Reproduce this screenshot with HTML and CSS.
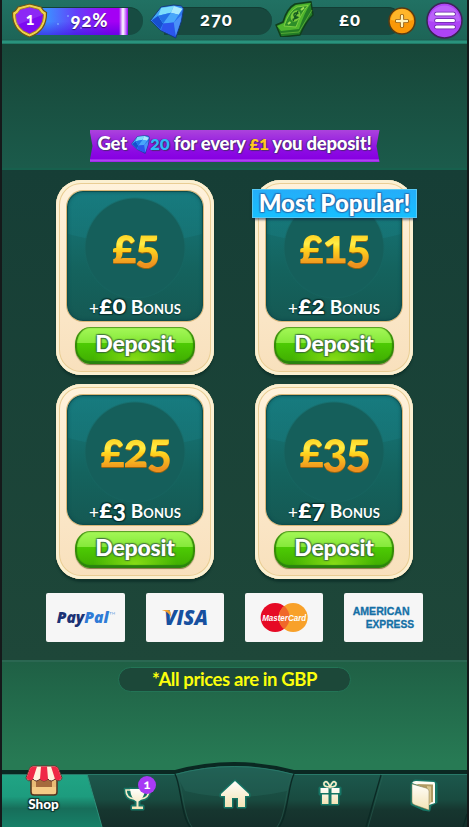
FILE: index.html
```html
<!DOCTYPE html>
<html lang="en">
<head>
<meta charset="utf-8">
<title>Shop</title>
<link rel="stylesheet" href="styles.css">
</head>
<body>
<svg class="defs" width="0" height="0" aria-hidden="true">
  <defs>
    <linearGradient id="cream" x1="0" y1="0" x2="0" y2="1"><stop offset="0" stop-color="#fffefa"/><stop offset="1" stop-color="#f3e3b5"/></linearGradient>
    <linearGradient id="gem" x1="0" y1="0" x2="1" y2="1"><stop offset="0" stop-color="#4fc4fa"/><stop offset=".5" stop-color="#2e86f3"/><stop offset="1" stop-color="#1b35dc"/></linearGradient>
    <symbol id="diamond" viewBox="0 0 36 36">
      <path d="M1 17 12 3 25 1 33 2 35 5 33 17 27 35 11 27Z" fill="url(#gem)" stroke="#173a7a" stroke-width="1" stroke-linejoin="round"/>
      <path d="M12 4 25 2 22 9 9 12Z" fill="#7bdcfb"/>
      <path d="M25 2 34 5 30 11 22 9Z" fill="#a9e9fd"/>
      <path d="M2 17 9 12 14 20 11 26Z" fill="#174fcf"/>
      <path d="M9 12 22 9 30 11 25 19 14 20Z" fill="#49a7fa"/>
      <path d="M14 20 25 19 26 33 12 27Z" fill="#2c55ed"/>
      <path d="M25 19 33 11 32 18 27 33Z" fill="#4a91f8"/>
      <path d="M9 12 22 9 14 20Z" fill="#2372e7"/>
    </symbol>
  </defs>
</svg>
<div class="app">
  <header class="topbar">
    <div class="level">
      <svg class="shield" width="37" height="35" viewBox="0 0 37 35">
        <path d="M18.500 1 30 4Q32 8 35.500 9.500 36 28 18.500 34 1 28 1.500 9.500 5 8 7 4Z" fill="#f1d34c" stroke="#6b5418" stroke-width="1.200"/>
        <path d="M18.500 4 28 6.500Q29.500 10 32.500 11.500 32.500 26 18.500 31 4.500 26 4.500 11.500 7.500 10 9 6.500Z" fill="#7d0af2" stroke="#a98722" stroke-width="1"/>
        <path d="M18.500 4.500 28 7Q29.500 10 32 11.700L6 22Q4.700 17 5 11.700 7.500 10 9 7Z" fill="#9c45f7" opacity=".5"/>
      </svg>
      <span class="rank">1</span>
      <div class="meter"><div class="meter-fill"><span class="num">92%</span></div></div>
    </div>
    <div class="counter gems">
      <svg class="icon-gem" width="36" height="35"><use href="#diamond"/></svg>
      <span class="num">270</span>
    </div>
    <div class="counter cash">
      <svg class="icon-cash" width="39" height="36" viewBox="0 0 39 36">
        <path d="M1 24 8 21Q12 7 20 3L36 0.800 38 14Q31 20 25 34L6 36Z" fill="#237d25" stroke="#10401c" stroke-width="1.500" stroke-linejoin="round"/>
        <path d="M2 25 9 22Q13 8 21 4L36 2Q30 10 24 28L6 30Z" fill="#4fb52e"/>
        <path d="M9 25Q14 10 22 6L33 4.500Q26 12 21 26Z" fill="#2d8e28" stroke="#8bd747" stroke-width=".8"/>
        <ellipse cx="20.500" cy="15" rx="6" ry="4.500" transform="rotate(-60 20.500 15)" fill="#78ca3d"/>
        <path d="M23.500 12.500Q19.500 11 19 13.500T22 16 17.500 18.500M23 10 18 20" fill="none" stroke="#155a20" stroke-width="1.400"/>
        <path d="M29 6.500 26 9M13 23 15.500 21" fill="none" stroke="#9cdd55" stroke-width="2"/>
        <path d="M6 32.500 24 31 37 9" fill="none" stroke="#62b33a" stroke-width=".8"/>
      </svg>
      <span class="num">£0</span>
      <svg class="icon-plus" width="28" height="28" viewBox="0 0 28 28">
        <circle cx="14" cy="14" r="13" fill="#fa9807" stroke="#593b12" stroke-width="1.500"/>
        <path d="M3 13A11 11 0 0 1 25 13Q15 16 3 13Z" fill="#ffb52a"/>
        <path d="M14 9v10M9 14h10" stroke="#92590b" stroke-width="4.200" stroke-linecap="round"/>
        <path d="M14 9v10M9 14h10" stroke="#fff3bc" stroke-width="2.400" stroke-linecap="round"/>
      </svg>
    </div>
    <svg class="icon-menu" width="37" height="37" viewBox="0 0 37 37">
      <circle cx="18.500" cy="18.500" r="17.500" fill="#ad43f6" stroke="#3c2357" stroke-width="1.500"/>
      <path d="M3 19A15.500 15.500 0 0 1 34 19Q18 23 3 19Z" fill="#bb62fa"/>
      <path d="M10.500 12h17M10.500 18.500h17M10.500 25h17" stroke="#6621a6" stroke-width="4.500" stroke-linecap="round"/>
      <path d="M10.500 12h17M10.500 18.500h17M10.500 25h17" stroke="#fff" stroke-width="3" stroke-linecap="round"/>
    </svg>
  </header>

  <section class="promo">
    <div class="ribbon"><p>Get <svg class="mini-gem" width="19" height="19"><use href="#diamond"/></svg><b class="blue">20</b> for every <b class="gold">£1</b> you deposit!</p></div>
  </section>

  <main class="shop">
    <div class="offers">
      <article class="card">
        <div class="panel"><strong class="price">£5</strong><p class="bonus">+<b>£0</b> <span>Bonus</span></p></div>
        <button class="deposit"><span>Deposit</span></button>
      </article>
      <article class="card">
        <div class="popular"><span>Most Popular!</span></div>
        <div class="panel"><strong class="price">£15</strong><p class="bonus">+<b>£2</b> <span>Bonus</span></p></div>
        <button class="deposit"><span>Deposit</span></button>
      </article>
      <article class="card">
        <div class="panel"><strong class="price">£25</strong><p class="bonus">+<b>£3</b> <span>Bonus</span></p></div>
        <button class="deposit"><span>Deposit</span></button>
      </article>
      <article class="card">
        <div class="panel"><strong class="price">£35</strong><p class="bonus">+<b>£7</b> <span>Bonus</span></p></div>
        <button class="deposit"><span>Deposit</span></button>
      </article>
    </div>
    <div class="payments">
      <svg class="pay" viewBox="0 0 78 49">
        <text x="10.500" y="30" textLength="52" lengthAdjust="spacingAndGlyphs" class="paypal"><tspan fill="#1c3275">Pay</tspan><tspan fill="#2f7bd6">Pal</tspan></text>
        <path d="M63.500 19.500h2M64.500 19.500v2M66.500 21.500v-2l1 1 1-1v2" fill="none" stroke="#2f7bd6" stroke-width=".4"/>
      </svg>
      <svg class="pay" viewBox="0 0 78 49">
        <text x="18" y="32" textLength="44" lengthAdjust="spacingAndGlyphs" class="visa" fill="#17509f">VISA</text>
        <path d="M15.500 17H22Q24 17 24.500 19.500L25 24Q22 18.500 15.500 17Z" fill="#f2a02d"/>
      </svg>
      <svg class="pay" viewBox="0 0 78 49">
        <circle cx="30" cy="24.500" r="14.500" fill="#e60a25"/>
        <circle cx="48" cy="24.500" r="14.500" fill="#f8a12a"/>
        <path d="M39 13.100A14.500 14.500 0 0 1 39 35.900 14.500 14.500 0 0 1 39 13.100Z" fill="#f0672a"/>
        <text x="17" y="28" textLength="44" lengthAdjust="spacingAndGlyphs" class="mc" fill="#fff">MasterCard</text>
      </svg>
      <svg class="pay" viewBox="0 0 78 49">
        <text x="8.500" y="22" textLength="57" lengthAdjust="spacingAndGlyphs" class="amex">AMERICAN</text>
        <text x="21.500" y="35" textLength="48.500" lengthAdjust="spacingAndGlyphs" class="amex">EXPRESS</text>
      </svg>
    </div>
  </main>

  <footer class="note-area"><p class="note"><span>*All prices are in GBP</span></p></footer>

  <nav class="tabs">
    <svg class="tabs-bg" width="465" height="66" viewBox="0 0 465 66">
      <defs>
        <linearGradient id="bar" x1="0" y1="0" x2="0" y2="1"><stop offset="0" stop-color="#1d5c50"/><stop offset=".55" stop-color="#194b40"/><stop offset=".72" stop-color="#16362f"/><stop offset="1" stop-color="#142f2b"/></linearGradient>
        <linearGradient id="active" x1="0" y1="0" x2="0" y2="1"><stop offset="0" stop-color="#20a484"/><stop offset=".42" stop-color="#1d9c7e"/><stop offset=".65" stop-color="#176e5a"/><stop offset="1" stop-color="#178068"/></linearGradient>
      </defs>
      <path d="M0 9H173Q232 -7 292 9H465V66H0Z" fill="#0a2822"/>
      <path d="M0 13H173Q232 -3 292 13H465V66H0Z" fill="url(#bar)"/>
      <path d="M0 13.500H85L100 66H0Z" fill="url(#active)"/>
      <path d="M85 13 100 66" stroke="#2d917b"/>
      <path d="M174 13Q232 -3 291 13L285 30Q232 42 183 30Z" fill="#2c6f62" opacity=".32"/>
      <path d="M0 13.500H173Q232 -2.500 292 13.500H465" fill="none" stroke="#287969"/>
      <path d="M173 13C179 24 179 55 188 66M292 13C286 24 286 55 277 66M379 14 364 66M465 53 461 66" fill="none" stroke="#0b2924" stroke-width="1.300"/>
      <path d="M175 14C181 25 181 55 190 66M290 14C284 25 284 55 275 66M381 14 366 66" fill="none" stroke="#2a6457" stroke-width=".5"/>
    </svg>
    <a class="tab active">
      <svg width="38" height="31" viewBox="0 0 38 31">
        <path d="M6 13H32V27Q32 30 29 30H9Q6 30 6 27Z" fill="#e9bb75" stroke="#56351f" stroke-width="1.500"/>
        <path d="M11 14H27V22H11Z" fill="#a56a3d"/><path d="M7 22H31V27Q31 29 29 29H9Q7 29 7 27Z" fill="#f5cb86"/>
        <path d="M8 1H30Q33 1 34 5L37 13Q35 18 30 14 26 18 23 14 19 18 15 14 11 18 8 14 3 18 1 13L4 5Q5 1 8 1Z" fill="#fff3dd" stroke="#5c3028"/>
        <path d="M8 1.500H12L8 14Q4 17 1.500 13L4.500 5Q5 2 8 1.500ZM16 1.500H22L23 14Q19 18 15 14ZM26 1.500H30Q33 2 33.500 5L36.500 13Q34 17 30 14Z" fill="#ef2946"/>
      </svg>
      <span>Shop</span>
    </a>
    <a class="tab trophy">
      <svg width="28" height="27" viewBox="0 0 28 27">
        <g stroke="#167565" stroke-width="3" stroke-linejoin="round" fill="#167565"><path d="M7 4H22Q20 14 16 16V21H20V24H9V21H13V16Q8 14 7 4Z"/></g>
        <path d="M8 5H3Q3 13 11 14M21 5H26Q26 13 18 14" fill="none" stroke="#167565" stroke-width="4.500"/>
        <path d="M8 5H3Q3 13 11 14M21 5H26Q26 13 18 14" fill="none" stroke="#f8edc8" stroke-width="1.600"/>
        <path d="M7 4H22Q21 14 15.500 16.500V21.500H20V24H9V21.500H13.500V16.500Q8 14 7 4Z" fill="url(#cream)"/>
      </svg>
      <span class="badge">1</span>
    </a>
    <a class="tab home">
      <svg width="34" height="33" viewBox="0 0 34 33"><path d="M17 3 31 16V18H27V29H20V20H14V29H7V18H3V16Z" fill="url(#cream)" stroke="#167565" stroke-width="3" stroke-linejoin="round" paint-order="stroke"/></svg>
    </a>
    <a class="tab gift">
      <svg width="24" height="27" viewBox="0 0 24 27">
        <path d="M2 9H22V15H20V25H4V15H2ZM12 8Q5 8 6 4 9 0 12 8 15 0 18 4 19 8 12 8" fill="#167565" stroke="#167565" stroke-width="3" stroke-linejoin="round"/>
        <path d="M2.500 9H10.500V14H2.500ZM13.500 9H21.500V14H13.500ZM4 15.500H10.500V25H4ZM13.500 15.500H20V25H13.500Z" fill="url(#cream)"/>
        <path d="M12 8Q5 8 6 4 9 0 12 8 15 0 18 4 19 8 12 8" fill="none" stroke="#f8edc8" stroke-width="1.700"/>
      </svg>
    </a>
    <a class="tab book">
      <svg width="29" height="33" viewBox="0 0 29 33">
        <path d="M3 5 6 2 25 3 27 5V23L21 26 20 31 14 30 3 25Z" fill="#167565" stroke="#167565" stroke-width="3" stroke-linejoin="round"/>
        <path d="M3 4Q4 2 7 2L25 3Q26 3 26 5V24L20 26V10Z" fill="#fffdf4"/><path d="M7 5 24 5.500V23L19 24V11Z" fill="#b09a63"/><path d="M18 7 22 7.500V24L19.500 25Z" fill="#d8c58e"/>
        <path d="M3 5 17 9Q20 10 20 12V31L6 26Q3 25 3 23Z" fill="url(#cream)" stroke="#8b7a48" stroke-width=".5"/>
      </svg>
    </a>
  </nav>
</div>
</body>
</html>
```

FILE: styles.css
```css
* { box-sizing: border-box; }
body { margin: 0; background: #15191a; font-family: Lato, "Open Sans", sans-serif; font-variant-numeric: oldstyle-nums; color: #fff; }
p { margin: 0; }
svg { display: block; flex: none; }
.defs { position: absolute; }
.app { width: 465px; height: 827px; margin: 0 2px; display: flex; flex-direction: column; overflow: hidden; }

.topbar { height: 44px; flex: none; display: flex; align-items: flex-start; padding: 3px 2px 0 9px; background: linear-gradient(#217163, #1d6557 39px, #1c5c50 40px, #29937d 41px, #29937d 43px, #196452 44px); }
.level { display: flex; position: relative; width: 138px; }
.shield { position: relative; z-index: 1; }
.rank { position: absolute; z-index: 2; left: 13px; top: 7px; width: 12px; text-align: center; font-size: 16px; line-height: 18px; font-weight: 900; }
.meter { width: 107px; height: 28px; margin: 4px 0 0 -12px; border-radius: 0 14px 14px 0; background: #174c42; border-top: 1px solid #124237; overflow: hidden; }
.meter-fill { width: 92px; height: 27px; display: flex; justify-content: center; padding-left: 15px; background: linear-gradient(90deg, transparent 83px, #eac8ff 86px, #fff 87px, #c164ff 90px, transparent 92px), radial-gradient(circle at 32px 8px, #87b9ffaa 0 .5px, transparent 1.5px), radial-gradient(circle at 45px 20px, #a184ffaa 0 .5px, transparent 1.5px), radial-gradient(circle at 22px 16px, #87b9ffaa 0 .5px, transparent 1.5px), linear-gradient(transparent 50%, #3900dc88), linear-gradient(90deg, #3f8cff 12px, #6340fa 40px, #a400f4 75px); }
.num { font-size: 18.500px; line-height: 24px; font-weight: 900; letter-spacing: .9px; text-shadow: 0 1px 1px #0008; }
.counter { display: flex; position: relative; }
.counter::before { content: ""; height: 27px; margin-top: 4px; border-radius: 0 14px 14px 0; background: #18493f; border-top: 1px solid #123d34; }
.gems { width: 125px; }
.gems::before { width: 108px; margin-left: 15px; }
.icon-gem { position: absolute; left: 0; top: 1px; }
.gems .num { position: absolute; left: 51px; top: 4px; }
.cash { width: 151px; }
.cash::before { width: 110px; margin-left: 18px; }
.icon-cash { position: absolute; left: 1px; top: -2px; }
.cash .num { position: absolute; left: 65px; top: 4px; }
.icon-plus { position: absolute; left: 114px; top: 4px; }
.icon-menu { margin-top: -1px; margin-left: 1px; }

.promo { height: 126px; flex: none; padding-top: 86px; background: linear-gradient(#174638, #1b5b4b); border-bottom: 2px solid #17604d; }
.ribbon { width: 290px; height: 32px; margin: 0 auto; display: flex; justify-content: center; background: linear-gradient(#ab43dc, #8c0be3 65%, #8700e2 90%, #b34cf3 94%, #9b1ce9); clip-path: polygon(0 0, 100% 0, calc(100% - 3px) 50%, 100% 100%, 0 100%, 3px 50%); }
.ribbon p { font-size: 18.500px; line-height: 26px; font-weight: 900; white-space: nowrap; letter-spacing: -.25px; text-shadow: 1px 1px 1px #50277a, -1px 0 1px #50277a; }
.mini-gem { display: inline-block; vertical-align: -4px; }
.blue { color: #2fbafa; }
.gold { color: #ffc81f; }

.shop { height: 490px; flex: none; padding-top: 10px; background: linear-gradient(#163e36, #1e4739); }
.offers { display: grid; grid-template-columns: 158px 158px; gap: 9px 41px; justify-content: center; }
.card { position: relative; height: 195px; padding: 11px 11px 0; border: 0; border-radius: 25px; background: linear-gradient(#fff2dc, #f8e0bc); box-shadow: inset 0 0 0 3px #fbf0d2, inset 0 0 0 4px #e9cd94, 0 3px 2px #10342c; }
.panel { height: 130px; border-radius: 16px; display: flex; flex-direction: column; align-items: center; background: radial-gradient(circle at 68px 57px, #155f5b 49px, #17666280 50px, transparent 51px), radial-gradient(ellipse 110px 42px at 68px 10px, #187e8266 98%, transparent), linear-gradient(#16797d, #14635e 60%, #155953); box-shadow: inset 0 0 4px #0b454a, inset 0 0 0 1px #11534f, 0 0 0 1px #d9b778; }
.price { height: 94px; padding: 28px 5px 0; font-size: 47px; line-height: 52px; font-weight: 900; letter-spacing: -1.8px; color: transparent; background: linear-gradient(#ffbd20 38px, #ffd829 46px, #ffee48 53px, #ffd51f 58px, #ee911f 74px); background-clip: text; -webkit-background-clip: text; filter: drop-shadow(0 1px 0 #956512); }
.bonus { margin-top: 9px; font-size: 18.500px; line-height: 28px; white-space: nowrap; text-shadow: 0 1px 1px #09332f; }
.bonus b { font-size: 25px; font-weight: 900; text-shadow: 1px 1px 1px #07312d, -1px -1px 1px #07312d, 1px -1px 1px #07312d, -1px 1px 1px #07312d; }
.bonus span { font-variant-caps: small-caps; font-weight: 700; font-size: 19px; letter-spacing: .1px; }
.deposit { display: flex; justify-content: center; width: 120px; height: 37px; margin: 6px auto 0; padding: 0; border: 0; border-radius: 15px / 17px; background: radial-gradient(ellipse 42px 26px at 50% 90%, #87dc16, transparent), linear-gradient(#a5f858, #86e93b 42%, #4dcb04 44%, #3faa01); box-shadow: inset 0 1px 1px #579d23, inset 2px 0 1px #328807, inset -2px 0 1px #328807, inset 0 -3px 1px #298210, 0 1px 1px #867549; color: #fff; font: inherit; }
.deposit span { font-size: 23px; line-height: 32px; font-weight: 900; letter-spacing: -.2px; text-shadow: 1px 1px 1px #38643aaa, -1px -1px 1px #38643aaa, 1px -1px 1px #38643aaa, -1px 1px 1px #38643aaa; }
.popular { position: absolute; z-index: 1; left: -3px; top: 9px; width: 165px; height: 29px; display: flex; justify-content: center; background: linear-gradient(#25adf9, #17c0ff); border: 1px solid #57c9f5; box-shadow: 0 2px 2px #1248; }
.popular span { font-size: 24px; line-height: 25px; font-weight: 900; white-space: nowrap; letter-spacing: 0; text-shadow: 1px 1px 1px #2861a4aa, -1px -1px 1px #2861a4aa, 1px -1px 1px #2861a4aa, -1px 1px 1px #2861a4aa; }
.payments { display: flex; justify-content: center; gap: 21px; margin-top: 14px; }
.pay { width: 78.300px; height: 49px; border-radius: 2px; background: #f6f6f6; }
.paypal { font: italic 900 16.500px "Open Sans", sans-serif; }
.visa { font: italic 800 21px "Open Sans", sans-serif; }
.mc { font: italic 700 9px "Liberation Sans", sans-serif; }
.amex { font: 700 10.500px "Liberation Sans", sans-serif; fill: #1570a6; stroke: #1570a6; stroke-width: .3px; }

.note-area { height: 101px; flex: none; padding-top: 5px; border-top: 2px solid #2b6752; background: linear-gradient(#1f6045, #277a54); }
.note { width: 233px; height: 25px; margin: 0 auto; display: flex; justify-content: center; border: 1px solid #237456; border-radius: 13px; background: #1c4839; }
.note span { font-size: 18.500px; line-height: 22px; font-weight: 700; letter-spacing: -.4px; color: #fbff0c; white-space: nowrap; }

.tabs { position: relative; height: 66px; flex: none; display: grid; grid-template-columns: 83px 104px 91px 100px 87px; justify-items: center; background: #277a54; }
.tabs-bg { position: absolute; inset: 0; }
.tab { position: relative; display: flex; flex-direction: column; align-items: center; }
.active { padding-top: 4px; }
.active span { font-size: 13.500px; line-height: 17px; font-weight: 900; text-shadow: 1px 1px 1px #122f2a, -1px -1px 1px #122f2a, 1px -1px 1px #122f2a, -1px 1px 1px #122f2a; }
.trophy { padding-top: 24px; }
.badge { position: absolute; left: 15px; top: 15px; width: 18px; height: 18px; border-radius: 9px; background: #a83af5; text-align: center; font-size: 13px; line-height: 17px; font-weight: 900; }
.home { padding-top: 17px; }
.gift { padding-top: 18px; }
.book { padding-top: 18px; }
```
